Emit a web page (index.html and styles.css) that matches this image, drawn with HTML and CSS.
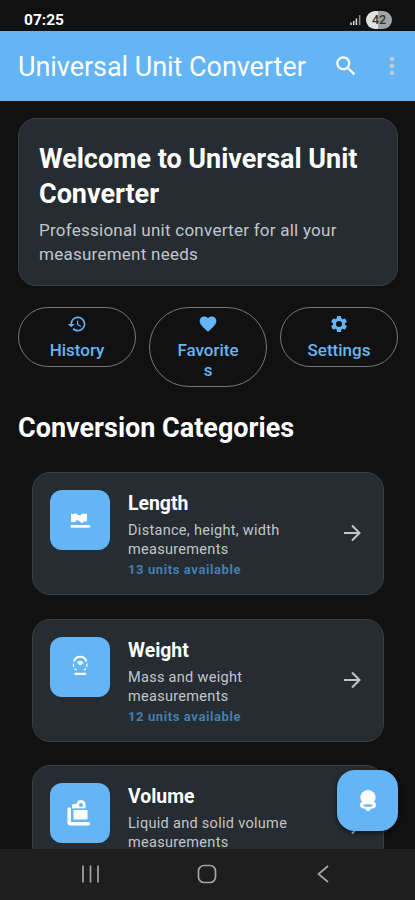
FILE: index.html
```html
<!DOCTYPE html>
<html lang="en">
  <head>
    <meta charset="UTF-8" />
    <meta name="viewport" content="width=device-width, initial-scale=1" />
    <title>Universal Unit Converter</title>
    <link rel="stylesheet" href="styles.css">
  </head>
  <body>
    <div class="screen">
      <div class="status-bar">
        <span class="clock">07:25</span>
        <svg class="signal" width="12" height="12" viewBox="0 0 12 12">
          <path d="M1 8.500v2.500M3.700 7v4M6.400 4.500v6.500" stroke="#ddd" stroke-width="1.500" />
          <path d="M9.600 1v10" stroke="#888" stroke-width="1.600" />
        </svg>
        <span class="battery">42</span>
      </div>

      <header class="app-bar">
        <h1>Universal Unit Converter</h1>
        <svg class="search" width="26" height="26" viewBox="0 0 24 24" fill="#fff">
          <path d="M15.500 14h-.79l-.28-.27A6.470 6.470 0 0 0 16 9.500 6.500 6.500 0 1 0 9.500 16c1.610 0 3.090-.59 4.230-1.570l.27.28v.79l5 4.990L20.490 19l-4.990-5zm-6 0C7.010 14 5 11.990 5 9.500S7.010 5 9.500 5 14 7.010 14 9.500 11.990 14 9.500 14z" />
        </svg>
        <svg class="more" width="6" height="20" viewBox="0 0 6 20" fill="#c3cbd3">
          <circle cx="3" cy="3" r="2.300" />
          <circle cx="3" cy="10" r="2.300" />
          <circle cx="3" cy="17" r="2.300" />
        </svg>
      </header>

      <main class="content">
        <section class="welcome">
          <h2>Welcome to Universal Unit Converter</h2>
          <p>Professional unit converter for all your measurement needs</p>
        </section>

        <div class="actions">
          <button class="action">
            <svg width="20" height="20" viewBox="0 0 24 24" fill="#64b5f6">
              <path d="M13 3a9 9 0 0 0-9 9H1l3.890 3.890.07.14L9 12H6a7 7 0 1 1 2.060 4.940l-1.420 1.420A9 9 0 1 0 13 3zm-1 5v5l4.280 2.540.72-1.210-3.500-2.080V8H12z" />
            </svg>
            <span>History</span>
          </button>
          <button class="action">
            <svg width="20" height="20" viewBox="0 0 24 24" fill="#64b5f6">
              <path d="M12 21.350l-1.450-1.320C5.400 15.360 2 12.280 2 8.500 2 5.420 4.420 3 7.500 3c1.740 0 3.410.81 4.500 2.090C13.090 3.810 14.760 3 16.500 3 19.580 3 22 5.420 22 8.500c0 3.780-3.400 6.860-8.550 11.540L12 21.350z" />
            </svg>
            <span>Favorites</span>
          </button>
          <button class="action">
            <svg width="20" height="20" viewBox="0 0 24 24" fill="#64b5f6">
              <path d="M19.140 12.940c.04-.3.060-.61.060-.94s-.02-.64-.07-.94l2.030-1.580a.49.49 0 0 0 .12-.61l-1.920-3.320a.49.49 0 0 0-.59-.22l-2.390.96a7 7 0 0 0-1.620-.94l-.36-2.540a.48.48 0 0 0-.48-.41h-3.840a.47.47 0 0 0-.47.41l-.36 2.540a7.300 7.300 0 0 0-1.620.94l-2.390-.96a.48.48 0 0 0-.59.22L2.740 8.870a.48.48 0 0 0 .12.61l2.030 1.580a6 6 0 0 0 0 1.880l-2.030 1.580a.49.49 0 0 0-.12.61l1.920 3.320c.12.22.37.29.59.22l2.390-.96c.5.38 1.030.7 1.620.94l.36 2.540c.05.24.24.41.48.41h3.840c.24 0 .44-.17.47-.41l.36-2.540a7.300 7.300 0 0 0 1.620-.94l2.390.96c.22.08.47 0 .59-.22l1.920-3.320a.48.48 0 0 0-.12-.61l-2.010-1.580zM12 15.600A3.600 3.600 0 1 1 12 8.400a3.600 3.600 0 0 1 0 7.200z" />
            </svg>
            <span>Settings</span>
          </button>
        </div>

        <h2 class="section-title">Conversion Categories</h2>

        <div class="categories">
          <article class="category">
            <div class="tile">
              <svg width="24" height="24" viewBox="0 0 24 24" fill="#fff">
                <path d="M3 5.500l2 .8 2.500-1 2.500 1.700 2.500.5 1.500-1.700h5v7.700h-2.800l-2.200 1.700-2.500-1.900-2.500-1.200-1.800 1.900H3z" />
                <path d="M2.700 17h19.500v2.700H2.700z" />
              </svg>
            </div>
            <div class="info">
              <h3>Length</h3>
              <p>Distance, height, width measurements</p>
              <span class="units">13 units available</span>
            </div>
            <svg class="arrow" width="24" height="24" viewBox="0 0 24 24">
              <path d="M4 12h15M12 4.500l7.500 7.500-7.500 7.500" />
            </svg>
          </article>

          <article class="category">
            <div class="tile">
              <svg width="24" height="24" viewBox="0 0 24 24" fill="none" stroke="#fff">
                <path d="M6 6.500q1.500-4.700 6.200-4.700t6.200 4.700" stroke-width="2" />
                <path d="M5.500 8.500v3.500M6.500 13.500l2 1.700M18.900 8.500v3.500M17.900 13.500l-2 1.700" stroke-width="1.200" />
                <path d="M9.300 8.200q0-2.400 2.900-2.400t2.900 2.400l-1.300 1.300-1.600 1-1.600-1z" fill="#e6f3ff" stroke="none" />
                <path d="M7.300 18.800h9.800" stroke-width="2.200" stroke-linecap="round" />
              </svg>
            </div>
            <div class="info">
              <h3>Weight</h3>
              <p>Mass and weight measurements</p>
              <span class="units">12 units available</span>
            </div>
            <svg class="arrow" width="24" height="24" viewBox="0 0 24 24">
              <path d="M4 12h15M12 4.500l7.500 7.500-7.500 7.500" />
            </svg>
          </article>

          <article class="category">
            <div class="tile">
              <svg width="30" height="30" viewBox="0 0 30 30" fill="none" stroke="#fff">
                <path d="M4.200 11v13.200q0 1.500 1.500 1.500H23.500" stroke-width="3.500" stroke-linecap="round" stroke-linejoin="round" />
                <path d="M8.500 12h14v9.500h-14z" fill="#fff" stroke="none" />
                <path d="M7 7.500q0-1.500 1.500-1.500h3q.7-4 4.500-4t4.500 4v4.500H7z" fill="#fff" stroke="none" />
                <circle cx="16" cy="7" r="2" fill="#64b5f6" stroke="none" />
                <path d="M7.500 11.200h14.500" stroke="#64b5f6" stroke-width="1" />
              </svg>
            </div>
            <div class="info">
              <h3>Volume</h3>
              <p>Liquid and solid volume measurements</p>
            </div>
            <svg class="arrow" width="24" height="24" viewBox="0 0 24 24">
              <path d="M4 12h15M12 4.500l7.500 7.500-7.500 7.500" />
            </svg>
          </article>
        </div>
      </main>

      <button class="fab">
        <svg width="24" height="28" viewBox="0 0 24 28">
          <circle cx="12" cy="10.500" r="7.600" fill="#fff" />
          <path d="M6 14.500h12l1.800 2q.7 5-3.300 5h-1.700l-.6 1.800h-1.200l-1 1.700-1-1.700H9.800l-.6-1.800H7.500q-4 0-3.300-5z" fill="#fff" />
          <path d="M7.500 17.700q4.500-1 9 0v1.500q-4.500 1-9 0z" fill="#64b5f6" />
        </svg>
      </button>

      <nav class="nav-bar">
        <svg width="20" height="20" viewBox="0 0 20 20">
          <path d="M2 1.500v17M9.500 1.500v17M17 1.500v17" />
        </svg>
        <svg width="20" height="20" viewBox="0 0 20 20">
          <rect x="1.500" y="1.500" width="17" height="17" rx="5.500" />
        </svg>
        <svg width="20" height="20" viewBox="0 0 20 20">
          <path d="M15 2L5.500 10l9.500 8" />
        </svg>
      </nav>
    </div>
  </body>
</html>
```
FILE: styles.css
```css
* {
  box-sizing: border-box;
}
body {
  margin: 0;
  background: #111;
  color: #fff;
  font-family: Roboto, "Liberation Sans", sans-serif;
}
h1,
h2,
h3,
p {
  margin: 0;
}
button {
  font-family: inherit;
  cursor: pointer;
}
.screen {
  position: relative;
  display: flex;
  flex-direction: column;
  height: 900px;
  overflow: hidden;
}

/* top bars */
.status-bar {
  display: flex;
  align-items: center;
  flex: none;
  height: 31px;
  padding: 8px 23px 0 24px;
}
.clock {
  flex: 1;
  font-size: 15.5px;
  font-weight: 700;
}
.signal {
  margin-right: 4px;
}
.battery {
  width: 26px;
  height: 18px;
  border-radius: 9px;
  background: linear-gradient(90deg, #e2e2e2 45%, #a3a3a3 45%);
  color: #333;
  font-size: 12.5px;
  font-weight: 500;
  line-height: 18px;
  text-align: center;
}
.app-bar {
  display: flex;
  align-items: center;
  flex: none;
  height: 70px;
  padding: 0 20px 0 18px;
  background: #64b5f6;
}
.app-bar h1 {
  flex: 1;
  padding-top: 2px;
  font-size: 27px;
  font-weight: 400;
  letter-spacing: -0.05px;
  white-space: nowrap;
}
.search {
  margin: 0 30px 1px 0;
}

/* scrolling content */
.content {
  flex: 1;
  min-height: 0;
  padding: 17px 17px 0 18px;
  overflow: hidden;
}
.welcome {
  height: 168px;
  padding: 23px 20px;
  border: 1px solid #3a3f42;
  border-radius: 18px;
  background: #252c32;
}
.welcome h2 {
  font-size: 27px;
  font-weight: 700;
  line-height: 35px;
  letter-spacing: -0.03px;
}
.welcome p {
  margin-top: 7px;
  color: #c3c6c9;
  font-size: 17px;
  line-height: 23.5px;
  letter-spacing: 0.25px;
}
.actions {
  display: grid;
  grid-template-columns: repeat(3, 1fr);
  align-items: start;
  gap: 13px;
  margin-top: 21px;
}
.action {
  display: flex;
  flex-direction: column;
  align-items: center;
  min-height: 60px;
  padding: 6px 25px;
  border: 1px solid #777;
  border-radius: 40px;
  background: none;
  color: #64b5f6;
  font-size: 17px;
  font-weight: 500;
  line-height: 20px;
}
.action span {
  max-width: 100%;
  margin-top: 6px;
  word-break: break-all;
}
.section-title {
  margin-top: 25px;
  font-size: 27px;
  font-weight: 700;
  line-height: 32px;
}
.categories {
  display: flex;
  flex-direction: column;
  gap: 23.6px;
  margin: 28px 14px 0;
}
.category {
  display: flex;
  flex: none;
  height: 123px;
  padding: 17px;
  border: 1px solid #3a3f42;
  border-radius: 18px;
  background: #252c32;
}
.tile {
  display: flex;
  align-items: center;
  justify-content: center;
  flex: none;
  width: 60px;
  height: 60px;
  border-radius: 12px;
  background: #64b5f6;
}
.info {
  flex: 1;
  margin-left: 18px;
}
.info h3 {
  padding-top: 1px;
  font-size: 19.4px;
  font-weight: 700;
  line-height: 26px;
}
.info p {
  max-width: 180px;
  margin-top: 4px;
  color: #c3c6c9;
  font-size: 14.5px;
  line-height: 19px;
  letter-spacing: 0.3px;
}
.units {
  display: block;
  margin-top: 2px;
  color: #467fae;
  font-size: 13px;
  font-weight: 700;
  line-height: 18px;
  letter-spacing: 0.6px;
}
.arrow {
  align-self: center;
  flex: none;
  margin: 0 2px 1px 0;
  fill: none;
  stroke: #c3c6c9;
  stroke-width: 2;
}

/* floats over the list */
.fab {
  position: absolute;
  right: 17px;
  bottom: 69px;
  display: flex;
  align-items: center;
  justify-content: center;
  width: 61px;
  height: 61px;
  padding: 0;
  border: none;
  border-radius: 18px;
  background: #64b5f6;
  box-shadow: 0 2px 5px rgba(0, 0, 0, 0.6);
}

.nav-bar {
  display: flex;
  align-items: center;
  justify-content: space-between;
  flex: none;
  height: 51px;
  padding: 0 82px 1px 81px;
  background: #1e1e1e;
}
.nav-bar svg {
  fill: none;
  stroke: #a5a5a5;
  stroke-width: 1.7;
}
```
